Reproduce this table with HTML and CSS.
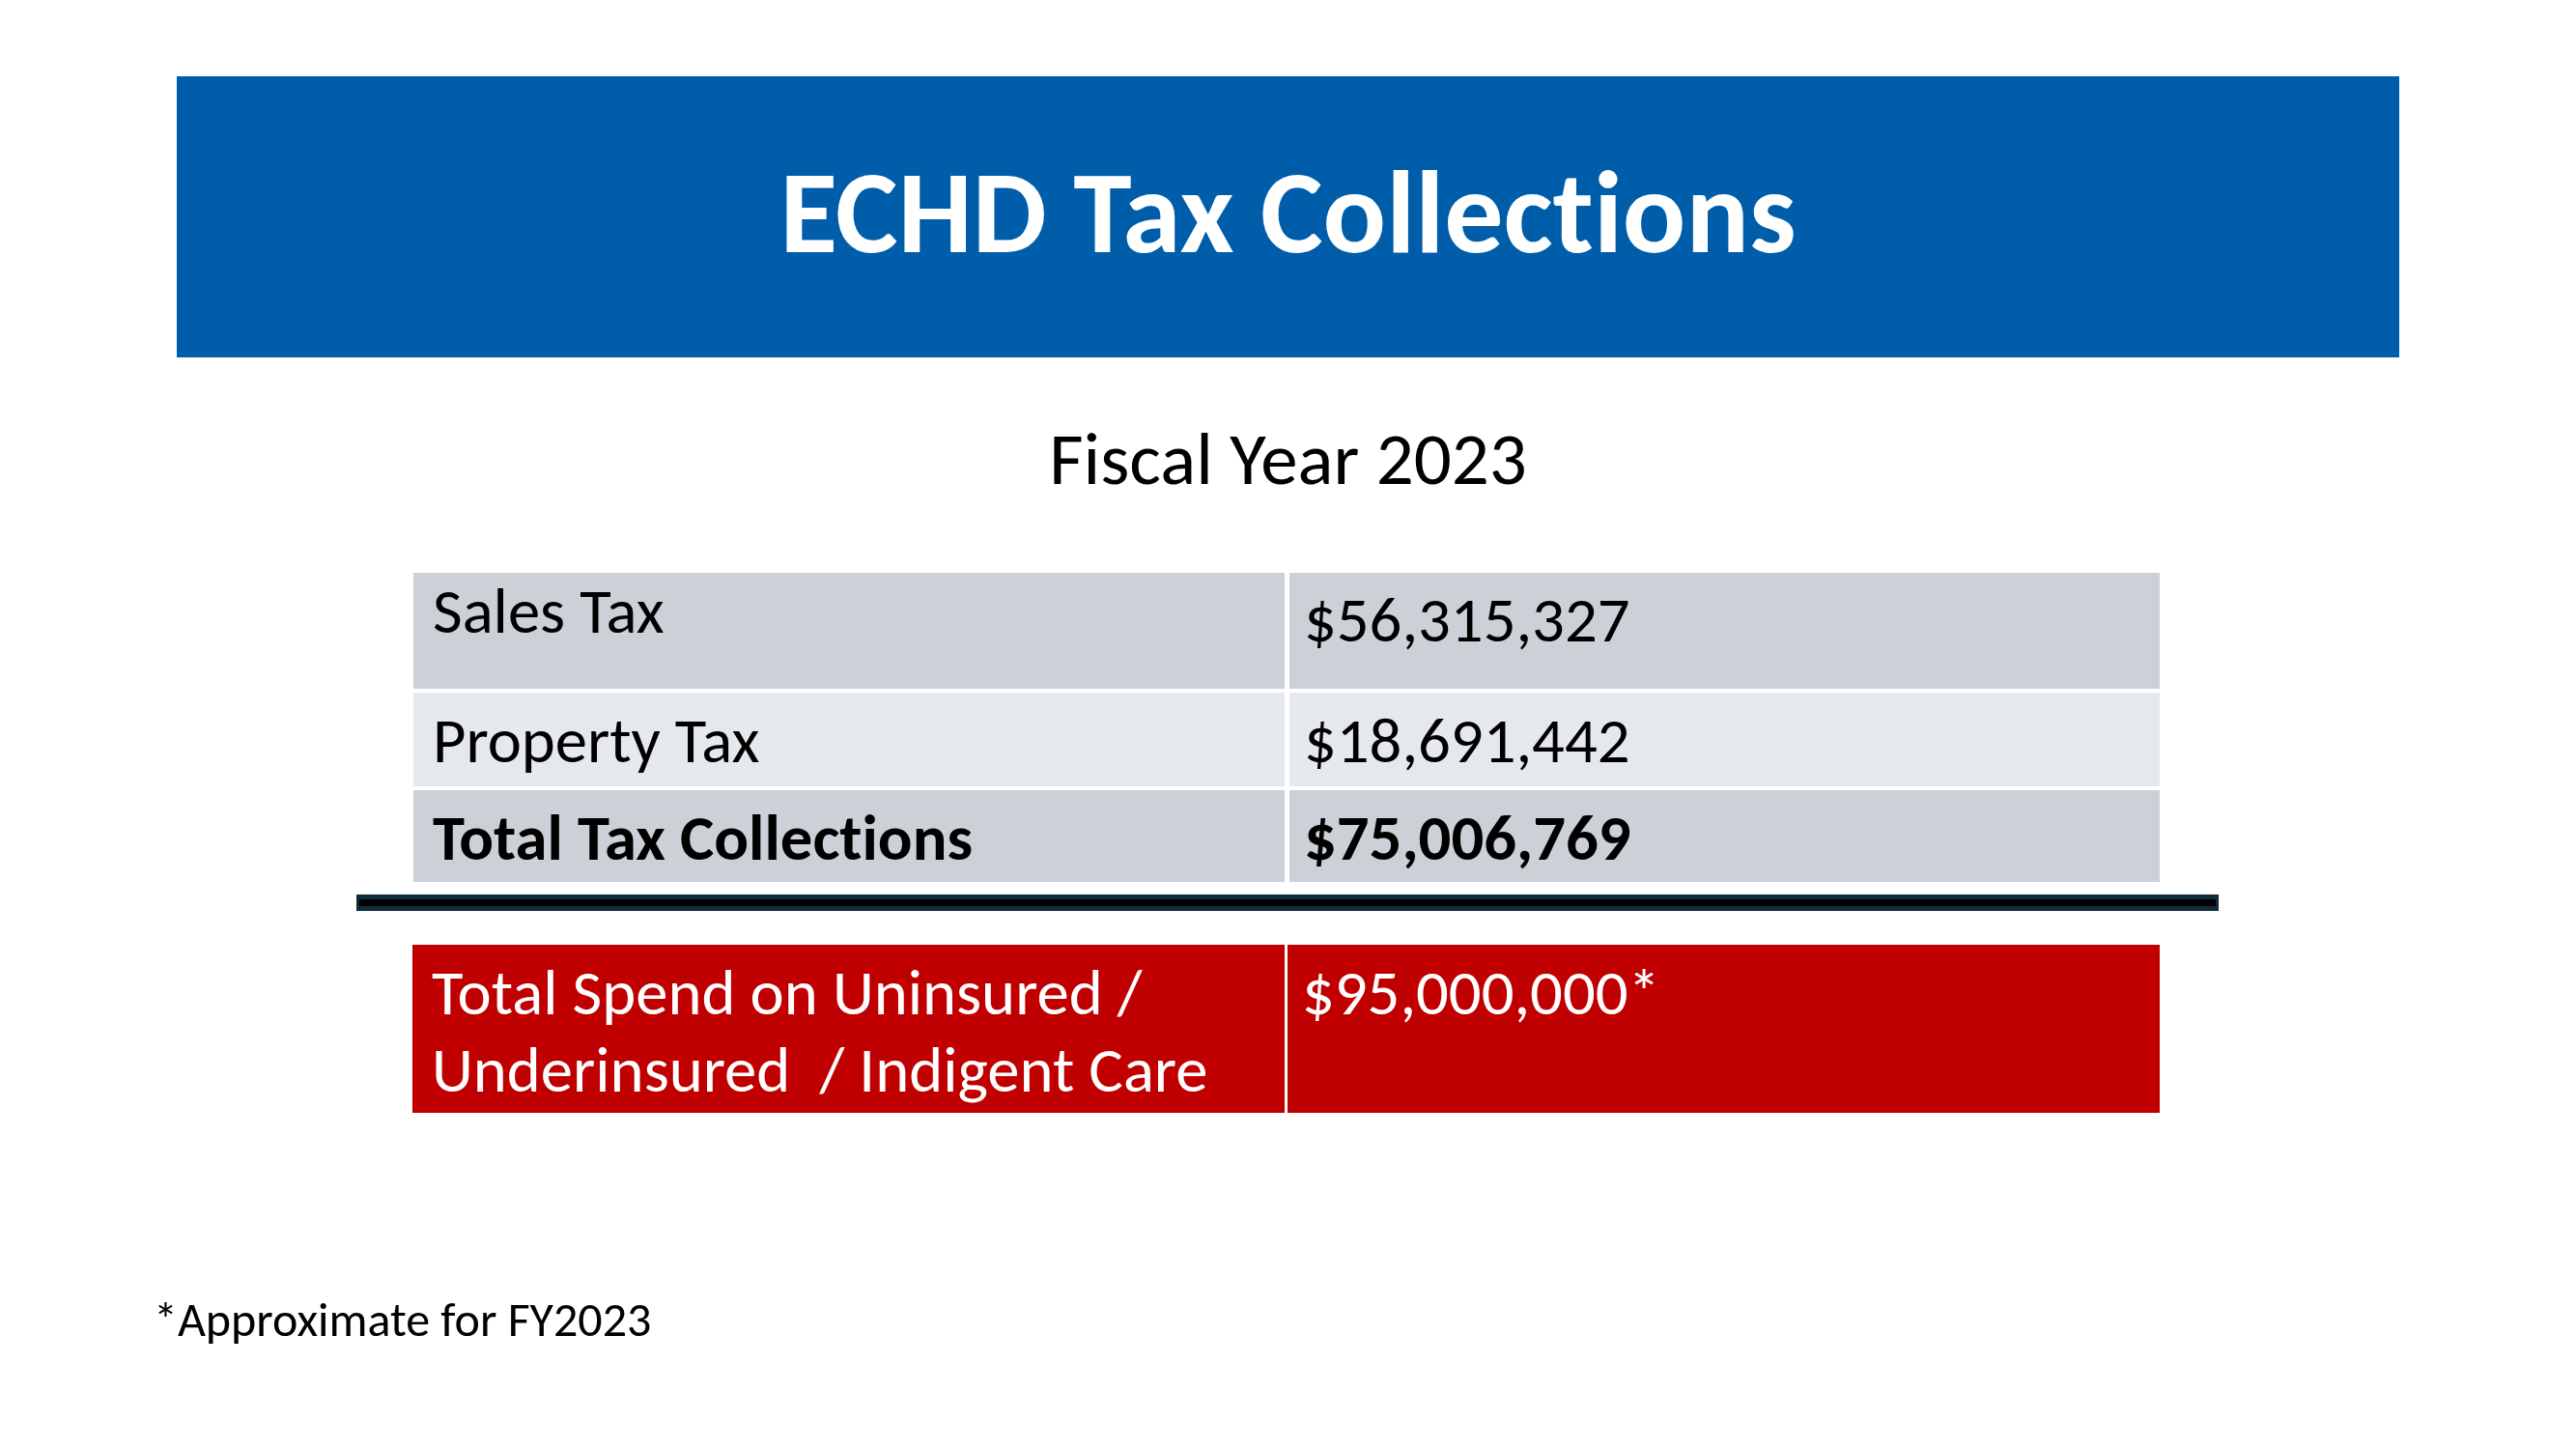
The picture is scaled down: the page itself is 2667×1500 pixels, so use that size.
FILE: index.html
```html
<!DOCTYPE html>
<html lang="en">
<head>
<meta charset="utf-8">
<title>ECHD Tax Collections</title>
<link rel="stylesheet" href="styles.css">
</head>
<body>
<div class="slide">
  <header class="banner">
    <h1 class="title">ECHD Tax Collections</h1>
  </header>
  <h2 class="subtitle">Fiscal Year 2023</h2>

  <div class="tax-table">
    <div class="row row-dark row-first">
      <div class="cell cell-label cell-sales">Sales Tax</div>
      <div class="cell cell-value">$56,315,327</div>
    </div>
    <div class="row row-light row-mid">
      <div class="cell cell-label">Property Tax</div>
      <div class="cell cell-value">$18,691,442</div>
    </div>
    <div class="row row-dark row-last">
      <div class="cell cell-label bold">Total Tax Collections</div>
      <div class="cell cell-value bold">$75,006,769</div>
    </div>
  </div>

  <div class="divider"></div>

  <div class="spend-table">
    <div class="cell cell-label spend">Total Spend on Uninsured /<br>Underinsured&nbsp; / Indigent Care</div>
    <div class="cell cell-value spend">$95,000,000*</div>
  </div>

  <p class="footnote">*Approximate for FY2023</p>
</div>
</body>
</html>
```

FILE: styles.css
```css
html, body {
  margin: 0;
  padding: 0;
  background: #ffffff;
}

body {
  font-family: "Carlito", "Lato", "Liberation Sans", sans-serif;
  font-variant-ligatures: none;
  color: #000000;
}

.slide {
  width: 2667px;
  height: 1500px;
  position: relative;
  overflow: hidden;
  display: flex;
  flex-direction: column;
  align-items: flex-start;
}

.banner {
  margin: 79px 0 0 183px;
  width: 2301px;
  height: 291px;
  background: #005daa;
  box-sizing: border-box;
  padding-top: 80px;
}

.title {
  margin: 0;
  text-align: center;
  color: #ffffff;
  font-weight: 700;
  font-size: 122px;
  line-height: 122px;
}

.subtitle {
  margin: 67px 0 0 0;
  width: 2667px;
  text-align: center;
  font-weight: 400;
  font-size: 77px;
  line-height: 77px;
}

.tax-table {
  margin: 79px 0 0 428px;
  display: flex;
  flex-direction: column;
  gap: 4px;
}

.row {
  display: grid;
  grid-template-columns: 902px 901px;
  column-gap: 5px;
}

.row-first .cell { height: 120px; }
.row-mid .cell { height: 97px; }
.row-last .cell { height: 95px; }

.row-dark .cell { background: #cbd1d6; }
.row-light .cell { background: #e5e8ec; }

.cell {
  box-sizing: border-box;
  padding: 10px 20px 0 20px;
  font-size: 66.7px;
  line-height: 80px;
}

.cell-value {
  padding-left: 15px;
}

.row-first .cell-value {
  padding-top: 9px;
}

.row-first .cell-sales {
  padding-top: 0;
}

.bold {
  font-weight: 700;
}

.divider {
  margin: 13px 0 0 369px;
  width: 1928px;
  height: 17px;
  box-sizing: border-box;
  background: #000000;
  border: 5px solid #0f2b3c;
  border-left-width: 3px;
  border-right-width: 3px;
}

.spend-table {
  margin: 35px 0 0 427px;
  display: grid;
  grid-template-columns: 903px 903px;
  column-gap: 3px;
}

.spend {
  height: 174px;
  background: #c00000;
  color: #ffffff;
  padding-top: 10px;
}

.footnote {
  margin: 0;
  position: absolute;
  left: 159px;
  top: 1336px;
  font-size: 50px;
  line-height: 60px;
}
```
